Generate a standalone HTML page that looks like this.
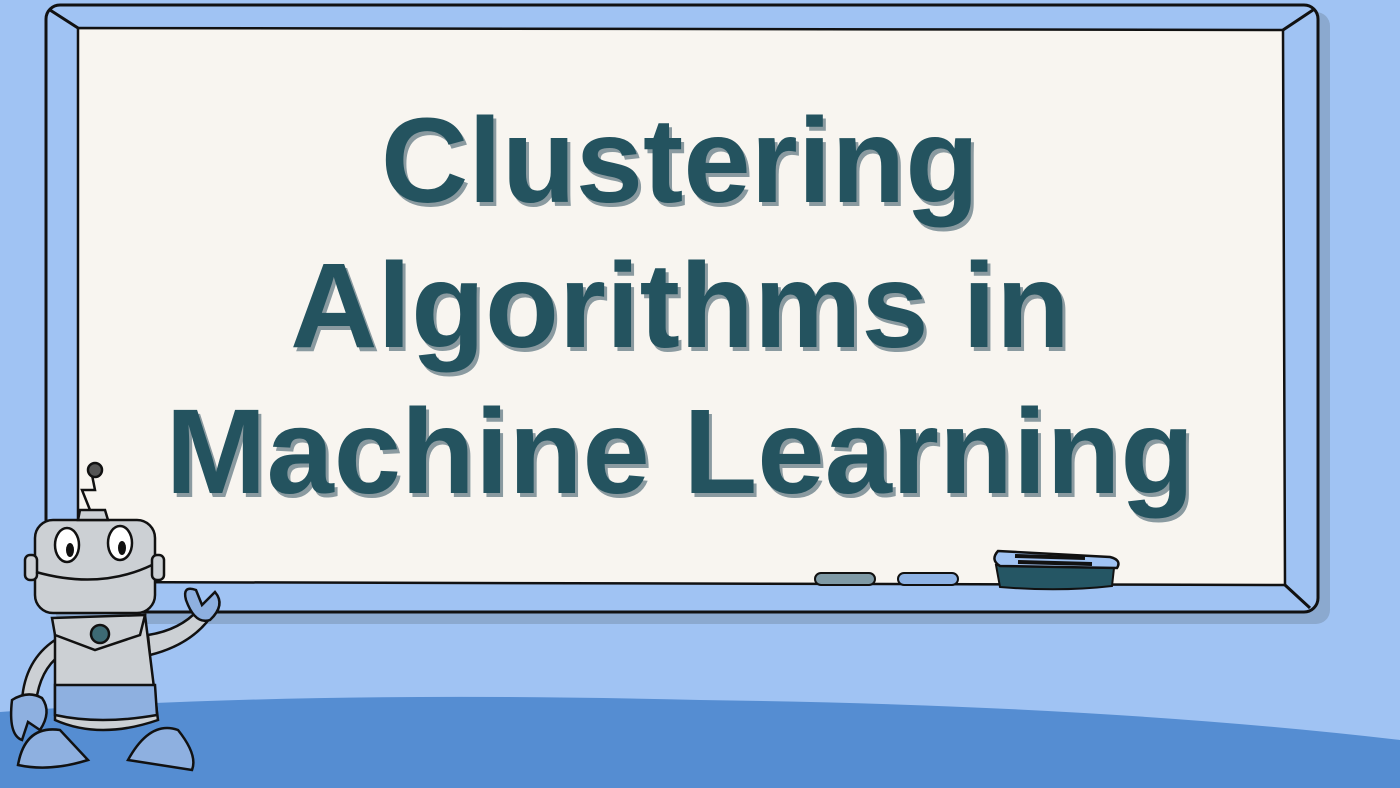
<!DOCTYPE html>
<html><head><style>
body{margin:0;width:1400px;height:788px;overflow:hidden;background:#a0c3f3;position:relative;font-family:"Liberation Sans",sans-serif}
.t{position:absolute;left:0;width:1360px;text-align:center;font-weight:bold;font-size:121px;color:#24535f;text-shadow:3px 4px 0 #8a9aa0;line-height:1}
</style></head><body>
<svg width="1400" height="788" style="position:absolute;left:0;top:0">
<path d="M0 712 Q300 690 700 700 Q1100 705 1400 740 L1400 788 L0 788Z" fill="#558dd2"/>
<rect x="55" y="12" width="1275" height="612" rx="14" fill="#7d97b8" opacity="0.6"/>
<rect x="46" y="5" width="1272" height="607" rx="14" fill="#a0c3f3" stroke="#111" stroke-width="3"/>
<path d="M78 28 L1283 30 L1285 585 L78 582Z" fill="#f8f5f0" stroke="#111" stroke-width="2.5"/>
<path d="M50 10 L78 28 M1313 10 L1283 30 M1285 585 L1310 608 M78 582 L50 606" stroke="#111" stroke-width="3"/>
<rect x="815" y="573" width="60" height="12" rx="6" fill="#7f9aa6" stroke="#111" stroke-width="2"/>
<rect x="898" y="573" width="60" height="12" rx="6" fill="#8eb3e6" stroke="#111" stroke-width="2"/>
<path d="M996 565 L1114 568 L1112 586 Q1060 592 1000 587Z" fill="#255664" stroke="#111" stroke-width="2"/>
<path d="M998 551 L1110 557 Q1122 560 1117 568 L1000 566 Q990 560 998 551Z" fill="#a0c3f3" stroke="#111" stroke-width="2.5"/>
<path d="M1015 556 L1085 558 M1018 562 L1092 564" stroke="#111" stroke-width="4"/>
<!-- robot -->
<g stroke="#111" stroke-width="2.5">
<path d="M148 635 Q180 630 198 610 L210 618 Q190 645 150 655Z" fill="#ccd0d4"/>
<path d="M186 600 Q182 585 196 590 L202 605 L215 592 Q226 605 210 620 Q195 625 186 600Z" fill="#8eb0e0"/>
<path d="M55 640 Q25 660 22 700 L36 702 Q40 670 60 655Z" fill="#ccd0d4"/>
<path d="M12 700 Q8 735 22 740 L28 722 L40 730 Q52 712 42 698 Q28 690 12 700Z" fill="#8eb0e0"/>
<path d="M55 620 L145 615 L158 720 Q100 740 55 720Z" fill="#ccd0d4"/>
<path d="M55 685 L155 685 L157 715 Q100 725 55 715Z" fill="#8eb0e0"/>
<path d="M52 618 L145 615 L140 635 L95 650 L55 635Z" fill="#ccd0d4"/>
<circle cx="100" cy="634" r="9" fill="#3d6a74"/>
<path d="M18 765 Q25 725 60 730 L88 760 Q50 772 18 765Z M128 760 Q150 720 178 730 Q198 755 192 770 Z" fill="#8eb0e0"/>
<rect x="35" y="520" width="120" height="93" rx="18" fill="#ccd0d4"/>
<rect x="25" y="555" width="12" height="25" rx="5" fill="#ccd0d4"/>
<rect x="152" y="555" width="12" height="25" rx="5" fill="#ccd0d4"/>
<path d="M36 572 Q100 590 152 565" fill="none"/>
<ellipse cx="67" cy="545" rx="12" ry="17" fill="#fff"/>
<ellipse cx="120" cy="543" rx="12" ry="17" fill="#fff"/>
<path d="M80 510 L105 510 L108 520 L78 520Z" fill="#ccd0d4"/>
<path d="M90 510 L82 490 L95 490 L92 475" fill="none"/>
<circle cx="95" cy="470" r="7" fill="#555"/>
</g>
<ellipse cx="70" cy="550" rx="4" ry="7" fill="#111"/>
<ellipse cx="122" cy="548" rx="4" ry="7" fill="#111"/>
</svg>
<div class="t" style="top:100px">Clustering</div>
<div class="t" style="top:245px">Algorithms in</div>
<div class="t" style="top:391px">Machine Learning</div>
</body></html>
